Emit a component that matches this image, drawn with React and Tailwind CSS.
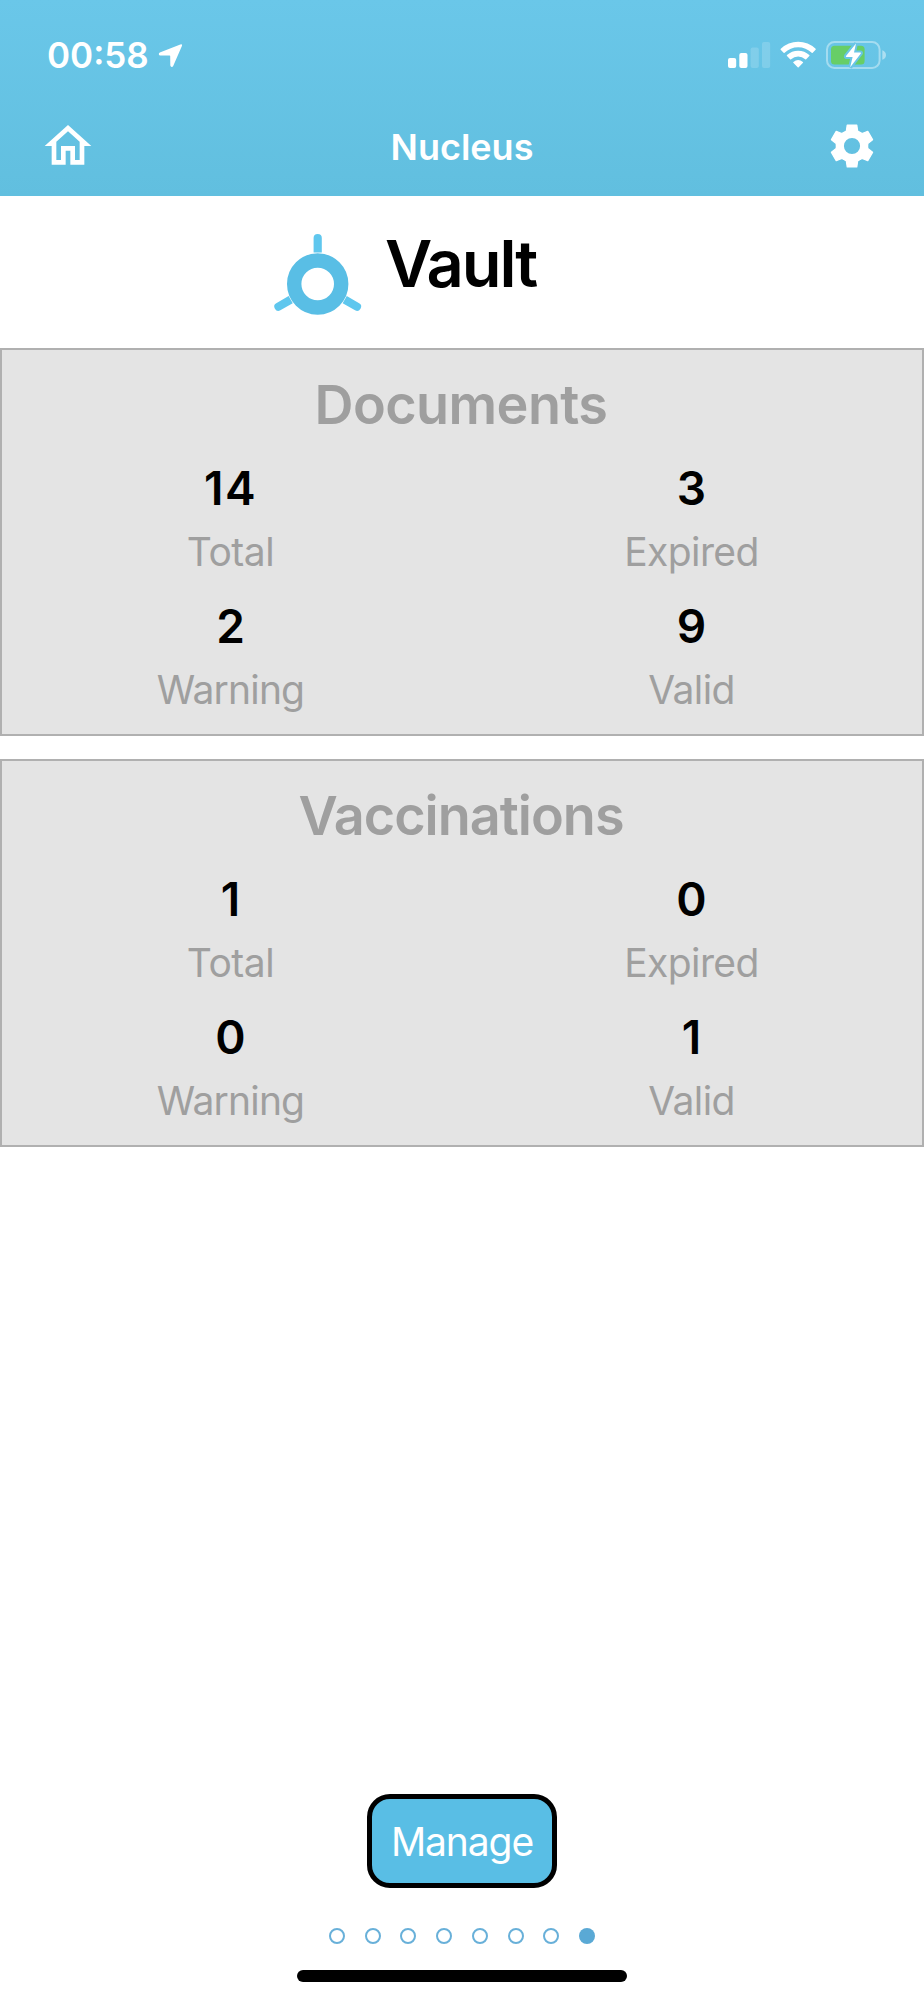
import { MdOutlineHome } from "react-icons/md";

const panels = [
  {
    title: "Documents",
    tracking: "tracking-[-0.6px]",
    gap: "mb-[22.6px]",
    stats: [["14", "Total"], ["3", "Expired"], ["2", "Warning"], ["9", "Valid"]],
  },
  {
    title: "Vaccinations",
    tracking: "tracking-[-1px]",
    gap: "",
    stats: [["1", "Total"], ["0", "Expired"], ["0", "Warning"], ["1", "Valid"]],
  },
];

const labelTracking = {
  Total: "tracking-[-0.5px]",
  Expired: "tracking-[-0.6px]",
  Warning: "tracking-[-0.8px]",
  Valid: "tracking-[-0.6px]",
};

function StatusIcons() {
  return (
    <svg width="162" height="32" viewBox="726 39 162 32" fill="#fff">
      <rect x="728" y="58" width="8.2" height="10" rx="2" />
      <rect x="739.3" y="53" width="8.2" height="15" rx="2" />
      <rect x="750.6" y="47.6" width="8.2" height="20.4" rx="2" opacity=".17" />
      <rect x="762" y="42" width="8.2" height="26" rx="2" opacity=".17" />
      <path d="M780.7 49.8Q780.3 49.3 780.8 48.8A25 25 0 0 1 815.6 48.8Q816 49.3 815.6 49.8L812.7 52.7Q812.2 53.1 811.7 52.7A19.5 19.5 0 0 0 784.6 52.7Q784.1 53.1 783.6 52.7Z" />
      <path d="M787 56.1Q786.5 55.6 787 55.1A16.4 16.4 0 0 1 809.3 55.1Q809.8 55.6 809.3 56.1L806.2 59.2Q805.7 59.6 805.2 59.2A10.5 10.5 0 0 0 791.1 59.2Q790.6 59.6 790.1 59.2Z" />
      <path d="M793.3 62.8Q792.9 62.3 793.4 61.9A7.6 7.6 0 0 1 802.9 61.9Q803.4 62.3 803 62.8L798.7 67.2Q798.2 67.7 797.7 67.2Z" />
      <rect x="827" y="42" width="52.6" height="26" rx="7.5" fill="none" stroke="#fff" strokeOpacity=".4" strokeWidth="2" />
      <path d="M882.3 50.3Q886 51.8 886 55Q886 58.4 882.3 59.8Z" opacity=".45" />
      <rect x="831" y="45.7" width="33.6" height="18.8" rx="3.5" fill="#67ce67" />
      <path d="M856 43.4L846 56Q845.4 57 846.6 57L852.6 57L850.2 67.2L860.8 53.5Q861.4 52.4 860.2 52.4L854 52.4Z" fill="#fff" stroke="#69c5e6" strokeWidth="4" strokeLinejoin="miter" paintOrder="stroke" />
    </svg>
  );
}

function GearIcon() {
  return (
    <svg className="mr-[46px] size-[52px] justify-self-end" viewBox="-26 -26 52 52">
      <g fill="#fff" stroke="#fff" strokeWidth="1.2" strokeLinejoin="round">
        {[0, 60, 120, 180, 240, 300].map((angle) => (
          <path key={angle} d="M-4.8 -21H4.8L5.7 -15Q8 -13.8 9 -12L0 -10L-9 -12Q-8 -13.8 -5.7 -15Z" transform={`rotate(${angle})`} />
        ))}
      </g>
      <circle r="12" fill="none" stroke="#fff" strokeWidth="7.8" />
    </svg>
  );
}

function VaultIcon() {
  return (
    <svg className="mt-9 shrink-0" width="92" height="84" viewBox="272 232 92 84">
      <circle cx="317.7" cy="284" r="23.5" fill="none" stroke="#59bee5" strokeWidth="14.4" />
      <g fill="#5fc7ee">
        <path d="M313.6 252.4V238Q313.6 234.1 317.7 234.1Q321.8 234.1 321.8 238V252.4Z" />
        <path d="M313.6 252.8V238.5Q313.6 234.6 317.7 234.6Q321.8 234.6 321.8 238.5V252.8Z" transform="rotate(120 317.7 284)" />
        <path d="M313.6 252.8V238.5Q313.6 234.6 317.7 234.6Q321.8 234.6 321.8 238.5V252.8Z" transform="rotate(240 317.7 284)" />
      </g>
    </svg>
  );
}

function Panel({ title, tracking, gap, stats }) {
  return (
    <section className={`border-2 border-[#b0b0b0] bg-[#e4e4e4] pb-[10px] text-center ${gap}`}>
      <h2 className={`pt-px pr-[2px] text-[54px] leading-[108px] font-semibold text-[#9f9f9f] ${tracking}`}>{title}</h2>
      <div className="-mt-px -ml-[2px] grid grid-cols-2 gap-y-[10px]">
        {stats.map(([value, label]) => (
          <div key={label}>
            <div className={`text-[46px] leading-[60px] font-semibold text-black ${value === "14" ? "tracking-[1.5px]" : ""}`}>{value}</div>
            <div className={`text-[39px] leading-[68px] font-normal text-[#9f9f9f] ${labelTracking[label]}`}>{label}</div>
          </div>
        ))}
      </div>
    </section>
  );
}

export default function App() {
  return (
    <div className="flex h-[2000px] w-[924px] flex-col bg-white font-['Inter',sans-serif]">
      <header className="h-[196px] shrink-0 bg-linear-to-b from-[#6ac7e9] to-[#61bfdf] text-white">
        <div className="flex h-[110px] items-center justify-between pr-[36px] pl-[47px]">
          <div className="flex items-center gap-[8px]">
            <span className="text-[35px] leading-none font-semibold">00:58</span>
            <svg width="26" height="26" viewBox="157 42 26 26" fill="#fff">
              <path d="M180.3 44.4Q182.8 43.6 181.9 46L173.2 65.9Q172.7 67 171.6 66.9Q170.3 66.7 170.3 65.3L170.2 56.1Q170.2 55.5 169.6 55.5L160.3 55.4Q159 55.4 158.8 54.2Q158.7 53.1 159.8 52.6Z" />
            </svg>
          </div>
          <StatusIcons />
        </div>
        <div className="grid h-[72px] grid-cols-3 items-center">
          <MdOutlineHome className="ml-[40px] size-[56px]" />
          <h1 className="pt-[2px] text-center text-[36px] leading-none font-semibold">Nucleus</h1>
          <GearIcon />
        </div>
      </header>

      <div className="flex h-[152px] shrink-0 pl-[272px]">
        <VaultIcon />
        <h2 className="ml-[21px] text-[65px] leading-[136px] font-semibold tracking-[-2.1px] text-black">Vault</h2>
      </div>

      {panels.map((p) => (
        <Panel key={p.title} {...p} />
      ))}

      <footer className="mt-auto flex flex-col items-center">
        <button className="h-[94px] w-[190px] rounded-[23px] border-5 border-black bg-[#59bee5] text-[39px] leading-none font-normal tracking-[-1.1px] text-white">
          Manage
        </button>
        <div className="mt-[40px] flex gap-[19.7px]">
          {[0, 1, 2, 3, 4, 5, 6].map((i) => (
            <span key={i} className="size-4 rounded-full border-2 border-[#68b0d9]" />
          ))}
          <span className="size-4 rounded-full bg-[#5aa9d5]" />
        </div>
        <div className="mt-[26px] mb-[18px] h-[12px] w-[330px] rounded-full bg-black" />
      </footer>
    </div>
  );
}
